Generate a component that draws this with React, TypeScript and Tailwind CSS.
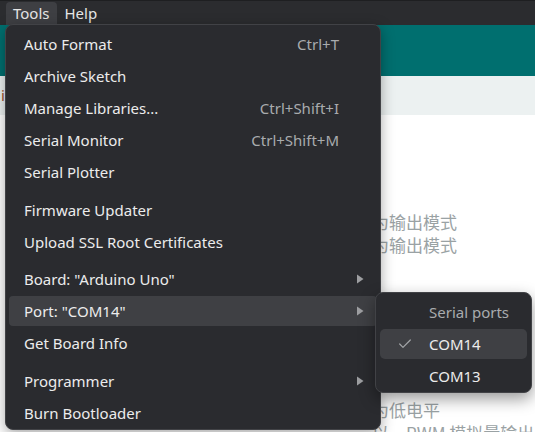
import { Check } from 'lucide-react';

type Item = { label: string; shortcut?: string; sub?: boolean; active?: boolean } | { sep: string };

const items: Item[] = [
  { label: 'Auto Format', shortcut: 'Ctrl+T' },
  { label: 'Archive Sketch' },
  { label: 'Manage Libraries...', shortcut: 'Ctrl+Shift+I' },
  { label: 'Serial Monitor', shortcut: 'Ctrl+Shift+M' },
  { label: 'Serial Plotter' },
  { sep: 'h-[6px]' },
  { label: 'Firmware Updater' },
  { label: 'Upload SSL Root Certificates' },
  { sep: 'h-[5px]' },
  { label: 'Board: "Arduino Uno"', sub: true },
  { label: 'Port: "COM14"', sub: true, active: true },
  { label: 'Get Board Info' },
  { sep: 'h-[6px]' },
  { label: 'Programmer', sub: true },
  { label: 'Burn Bootloader' },
];

const Arrow = () => (
  <svg width="8" height="10" viewBox="0 0 8 10" className="absolute right-[13px] top-[11px]">
    <path d="M1 0.5 L7.5 5 L1 9.5 Z" fill="#9d9ea1" />
  </svg>
);

export default function App() {
  const font = { fontFamily: '"Segoe UI", "Noto Sans", "Noto Sans CJK SC", sans-serif' };
  return (
    <div className="relative w-[535px] h-[432px] overflow-hidden bg-white" style={font}>
      {/* menubar */}
      <div className="h-[25px] bg-[#2b2c2f] flex items-end pl-[6px] text-[15px] text-[#e6e6e6] border-t border-[#1e1f21]">
        <div className="h-[23px] px-[7px] flex items-center bg-[#3e3f43] rounded-t-[4px]">Tools</div>
        <div className="h-[23px] px-[8px] flex items-center">Help</div>
      </div>
      {/* page behind */}
      <div className="h-[51px] bg-[#006f6f]" />
      <div className="h-[39px] bg-[#ecf1f1] text-[15px] text-[#a0522d] leading-[39px] pl-px">i</div>
      <div className="text-[17px] text-[#9aa2a4] leading-[23px]" style={{ fontFamily: '"Noto Sans CJK SC", sans-serif' }}>
        <div className="h-[95px]" />
        <div className="pl-[372px]">为输出模式</div>
        <div className="pl-[372px]">为输出模式</div>
        <div className="h-[142px]" />
        <div className="pl-[372px]">为低电平</div>
        <div className="pl-[372px] whitespace-nowrap">以，PWM 模拟量输出</div>
      </div>

      {/* Tools menu */}
      <div className="absolute left-[5px] top-[24px] w-[376px] h-[406px] bg-[#2a2b2f] border border-[#414246] rounded-[8px] shadow-[0_4px_14px_rgba(0,0,0,0.35)] px-[3px] pt-[3px] text-[15px] overflow-hidden">
        {items.map((it, i) =>
          'sep' in it ? (
            <div key={i} className={it.sep} />
          ) : (
            <div key={i} className="relative h-[32px] py-px">
              <div
                className={`h-full flex items-center pl-[15px] pr-[38px] rounded-[4px] ${
                  it.active ? 'bg-[#3f4044]' : ''
                }`}
              >
                <span className="text-[#ececec] flex-1">{it.label}</span>
                {it.shortcut && <span className="text-[#a9abae]">{it.shortcut}</span>}
              </div>
              {it.sub && <Arrow />}
            </div>
          )
        )}
      </div>

      {/* Port submenu */}
      <div className="absolute left-[375px] top-[292px] w-[157px] h-[101px] bg-[#2a2b2f] border border-[#414246] rounded-[8px] shadow-[0_6px_16px_rgba(0,0,0,0.4)] px-[4px] pt-[3px] text-[15px]">
        <div className="h-[32px] flex items-center pl-[49px] text-[#a9abae]">Serial ports</div>
        <div className="h-[32px] py-px">
          <div className="h-full flex items-center rounded-[5px] bg-[#3f4044]">
            <div className="w-[49px] flex justify-center pl-[1px]">
              <Check size={16} strokeWidth={1.8} color="#a3a5a8" />
            </div>
            <span className="text-[#ececec]">COM14</span>
          </div>
        </div>
        <div className="h-[32px] flex items-center pl-[49px] text-[#ececec]">COM13</div>
      </div>
    </div>
  );
}
